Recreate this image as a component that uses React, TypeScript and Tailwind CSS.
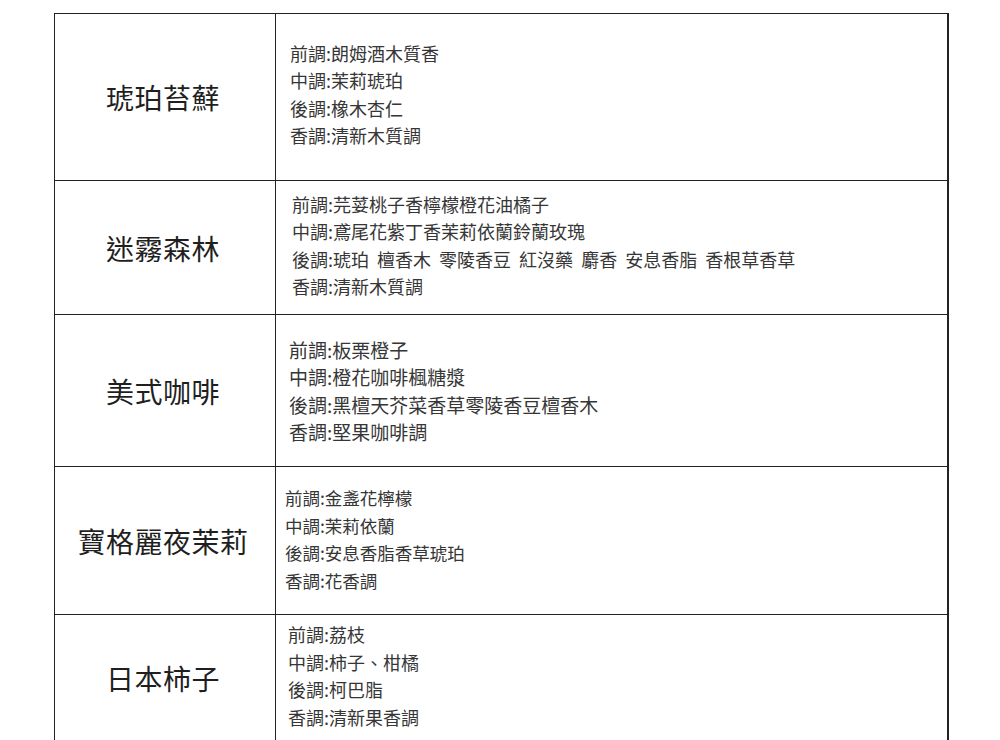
type Row = {
  name: string;
  height: string;
  pad: string;
  size: string;
  notes: string[];
};

const rows: Row[] = [
  {
    name: "琥珀苔蘚",
    height: "h-[167px]",
    pad: "pl-[14px] pb-[5px]",
    size: "text-[18px]",
    notes: ["前調:朗姆酒木質香", "中調:茉莉琥珀", "後調:橡木杏仁", "香調:清新木質調"],
  },
  {
    name: "迷霧森林",
    height: "h-[134px]",
    pad: "pl-[16px] pb-[4px]",
    size: "text-[18px]",
    notes: [
      "前調:芫荽桃子香檸檬橙花油橘子",
      "中調:鳶尾花紫丁香茉莉依蘭鈴蘭玫瑰",
      "後調:琥珀 檀香木 零陵香豆 紅沒藥 麝香 安息香脂 香根草香草",
      "香調:清新木質調",
    ],
  },
  {
    name: "美式咖啡",
    height: "h-[152px]",
    pad: "pl-[13px]",
    size: "text-[19px]",
    notes: ["前調:板栗橙子", "中調:橙花咖啡楓糖漿", "後調:黑檀天芥菜香草零陵香豆檀香木", "香調:堅果咖啡調"],
  },
  {
    name: "寶格麗夜茉莉",
    height: "h-[148px]",
    pad: "pl-[9px] pb-[3px]",
    size: "text-[17.5px]",
    notes: ["前調:金盞花檸檬", "中調:茉莉依蘭", "後調:安息香脂香草琥珀", "香調:花香調"],
  },
  {
    name: "日本柿子",
    height: "h-[127px]",
    pad: "pl-[12px] pb-[4px]",
    size: "text-[18px]",
    notes: ["前調:荔枝", "中調:柿子、柑橘", "後調:柯巴脂", "香調:清新果香調"],
  },
];

export default function App() {
  return (
    <div
      className="w-[1000px] h-[740px] overflow-hidden bg-white pt-[13px] pl-[54px]"
      style={{ fontFamily: '"Noto Sans CJK TC", "Noto Sans", sans-serif' }}
    >
      <div className="w-[895px] border-t border-l border-r-2 border-[#222]">
        {rows.map((row) => (
          <div key={row.name} className={`flex ${row.height} border-b border-[#222]`}>
            <div className="w-[221px] shrink-0 border-r border-[#222] flex items-center justify-center">
              <span className="text-[28px] tracking-[0.5px] text-[#1f1f1f] pr-[4px]">{row.name}</span>
            </div>
            <div className={`flex flex-col justify-center ${row.pad}`}>
              {row.notes.map((n) => (
                <div key={n} className={`${row.size} leading-[27.5px] text-[#363636] [word-spacing:4px]`}>
                  {n}
                </div>
              ))}
            </div>
          </div>
        ))}
      </div>
    </div>
  );
}
